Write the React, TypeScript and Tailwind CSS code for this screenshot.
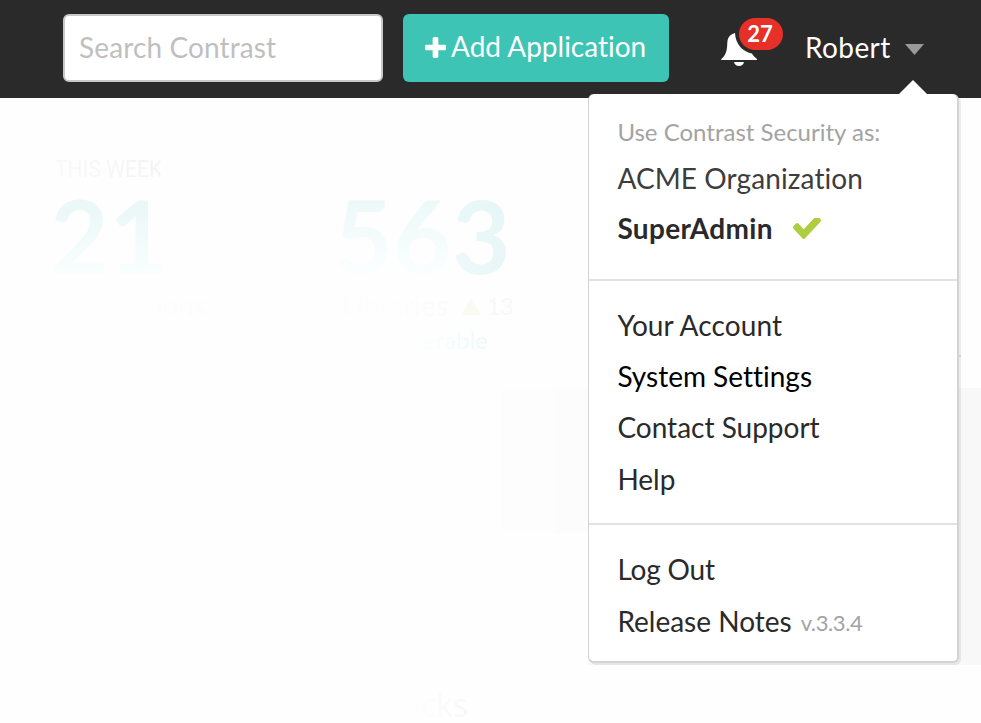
import React from "react";

type RowProps = {
  children: React.ReactNode;
  className?: string;
};

function MenuRow({ children, className = "text-[#2a2a2a]" }: RowProps) {
  return (
    <a className={`flex h-[51.3px] items-center whitespace-nowrap text-[28px] leading-none ${className}`}>
      {children}
    </a>
  );
}

function Plus() {
  return (
    <svg className="mb-[2px] ml-[2px] mr-[5px] size-[21px]" viewBox="192 128 1408 1408" fill="#fff">
      <path d="M1600 736v192q0 40-28 68t-68 28h-416v416q0 40-28 68t-68 28h-192q-40 0-68-28t-28-68v-416h-416q-40 0-68-28t-28-68v-192q0-40 28-68t68-28h416v-416q0-40 28-68t68-28h192q40 0 68 28t28 68v416h416q40 0 68 28t28 68z" />
    </svg>
  );
}

function Check() {
  return (
    <svg className="mt-[2px] ml-[20px] h-[21px] w-[28px]" viewBox="121 434 1550 1088" preserveAspectRatio="none" fill="#aecd3f">
      <path d="M1671 566q0 40-28 68l-724 724-136 136q-28 28-68 28t-68-28l-136-136-362-362q-28-28-28-68t28-68l136-136q28-28 68-28t68 28l294 295 656-657q28-28 68-28t68 28l136 136q28 28 28 68z" />
    </svg>
  );
}

function Bell() {
  return (
    <svg className="mt-[30px] h-[38px] w-[40px]" viewBox="720 30 40 38" fill="#fff">
      <path d="M735 33C729.500 34.500 727.500 38 727.300 43C727 51 726 55 721.300 59V60H757V59C754.500 57 753 55.500 752 53.500C743.500 52 735.500 45 735 33Z" />
      <path d="M734 62H744C743.500 64.500 741.500 66 739 66S734.500 64.500 734 62Z" />
    </svg>
  );
}

function TopBar() {
  return (
    <header className="flex h-[98px] items-start bg-[#2a2a2a] pl-[63px]">
      <div className="mt-[14px] flex h-[68px] w-[320px] items-center rounded-[6px] border-2 border-[#c8c8c8] bg-white pb-[2px] pl-[14px] text-[28px] leading-none tracking-[0.12px] text-[#bfbfbf]">
        Search Contrast
      </div>
      <button className="mt-[14px] ml-5 flex h-[68px] w-[266px] items-center rounded-[6px] bg-[#3ec4b4] pl-[20px] text-[28px] leading-none whitespace-nowrap text-white">
        <Plus />
        <span className="pb-[4px]">Add Application</span>
      </button>
      <div className="relative ml-[51px] w-[40px]">
        <Bell />
        <span className="absolute top-[18px] left-[19px] flex h-8 w-[44px] items-center justify-center rounded-full bg-[#e73028] pr-[2px] text-[22px] leading-none font-bold text-white">
          27
        </span>
      </div>
      <div className="ml-[45px] flex h-[96px] items-center text-[28px] leading-none text-white">
        <span className="pb-[2px] tracking-[0.4px]">Robert</span>
        <svg className="mt-[2px] ml-[14px] h-[11px] w-[19px]" viewBox="0 0 19 11" fill="#999">
          <path d="M0 0H19L9.500 11Z" />
        </svg>
      </div>
    </header>
  );
}

function UserMenu() {
  return (
    <div className="absolute top-[94px] left-[588px] h-[569px] w-[371px] rounded-[6px] border border-t-0 border-r-2 border-b-2 border-[#d3d3d3] bg-white shadow-[2px_2px_0_rgba(0,0,0,0.07)]">
      <svg className="absolute -top-[14px] left-[309px] h-[15px] w-[30px]" viewBox="0 0 30 15" fill="#fff">
        <path d="M0 15L15 0L30 15Z" />
      </svg>
      <section className="h-[187px] border-b-2 border-[#e2e2e2] pt-[17px] pl-[28.4px]">
        <p className="flex h-[41px] items-center text-[24px] leading-none text-[#a3a3a3]">Use Contrast Security as:</p>
        <MenuRow className="tracking-[0.1px] text-[#3d3d3d]">ACME Organization</MenuRow>
        <MenuRow className="-mt-[1px] font-bold text-[#2a2a2a]">
          <span className="tracking-[0.35px]">SuperAdmin</span>
          <Check />
        </MenuRow>
      </section>
      <section className="h-[244px] border-b-2 border-[#e2e2e2] pt-[18px] pl-[28.4px]">
        <MenuRow className="tracking-[0.1px] text-[#2a2a2a]">Your Account</MenuRow>
        <MenuRow className="text-black">System Settings</MenuRow>
        <MenuRow>Contact Support</MenuRow>
        <MenuRow className="pt-[1px] text-[#2a2a2a]">Help</MenuRow>
      </section>
      <section className="pt-[18px] pl-[28.4px]">
        <MenuRow className="tracking-[-0.2px] text-[#2a2a2a]">Log Out</MenuRow>
        <MenuRow className="pt-[2px] text-[#2a2a2a]">
          Release Notes
          <span className="ml-[9px] pt-[4px] text-[22px] tracking-[-0.4px] text-[#a3a3a3]">v.3.3.4</span>
        </MenuRow>
      </section>
    </div>
  );
}

function Dashboard() {
  return (
    <main className="flex h-[625px] flex-col">
      <div className="flex h-[290px] shrink-0">
        <div className="w-[338px] pt-[57px] pl-[55px]">
          <p className="h-[28px] w-[120px] origin-left scale-x-[0.88] bg-linear-to-r from-[#f9f9f9] to-[#f3f3f3] bg-clip-text font-[Roboto,sans-serif] text-[24px] leading-[28px] whitespace-nowrap text-transparent">
            THIS WEEK
          </p>
          <p className="-ml-[5px] h-[104px] w-[122px] bg-linear-to-b from-[#e9f7f7] from-15% to-[#fafefe] to-90% bg-clip-text text-[101.5px] leading-[104px] font-bold text-transparent">
            21
          </p>
          <p className="mt-[1px] w-[155px] bg-linear-to-r from-[#fefefe] from-40% to-[#fcfcfc] bg-clip-text text-[28px] leading-[34px] text-transparent">
            Applications
          </p>
        </div>
        <div className="w-[247px] pt-[85px]">
          <p className="-ml-[4px] flex h-[104px] text-[101.5px] leading-[104px] font-bold">
            <span className="bg-linear-to-b from-[#edf9f9] from-20% to-[#fbfefe] to-85% bg-clip-text text-transparent">56</span>
            <span className="bg-linear-to-bl from-[#e5f5f6] to-[#eef9fa] bg-clip-text text-transparent">3</span>
          </p>
          <p className="mt-[1px] flex h-[34px] items-center text-[28px] leading-none text-[#f8f8f8]">
            <span className="w-[123px] bg-linear-to-r from-[#fdfdfd] from-50% to-[#f9f9f9] bg-clip-text pl-[4px] leading-[34px] tracking-[0.2px] text-transparent">Libraries</span>
            <svg className="mt-[2px] h-[17px] w-[20px]" viewBox="0 0 20 18" preserveAspectRatio="none" fill="#fafbf0">
              <path d="M0 18L10 0L20 18Z" />
            </svg>
            <span className="ml-[6px] pt-[2px] text-[23px]">13</span>
          </p>
          <p className="h-[36px] w-[150px] bg-linear-to-r from-[#fefefe] from-50% to-[#ecf9f9] bg-clip-text text-right text-[24px] leading-[36px] text-transparent">
            Vulnerable
          </p>
        </div>
        <div className="mt-[257px] mr-[20px] ml-[20px] h-[2px] flex-1 bg-[#e2e2e2]" />
      </div>
      <div className="flex h-[277px] shrink-0">
        <div className="ml-[502px] h-[145px] w-[54px] bg-[#fdfdfd]" />
        <div className="h-[145px] w-[32px] bg-[#fcfcfc]" />
        <div className="h-full flex-1 bg-[#f8f8f8]" />
      </div>
      <p className="mt-[18px] ml-[328px] h-[44px] w-[140px] shrink-0 bg-linear-to-r from-[#fefefe] from-60% to-[#f7f7f7] bg-clip-text text-right font-['Open_Sans',sans-serif] text-[32px] leading-[44px] text-transparent">
        Attacks
      </p>
    </main>
  );
}

export default function App() {
  return (
    <div className="relative h-[723px] w-[981px] overflow-hidden bg-[#fefefe] font-[Lato,sans-serif] [font-variant-ligatures:none]">
      <TopBar />
      <Dashboard />
      <UserMenu />
    </div>
  );
}
